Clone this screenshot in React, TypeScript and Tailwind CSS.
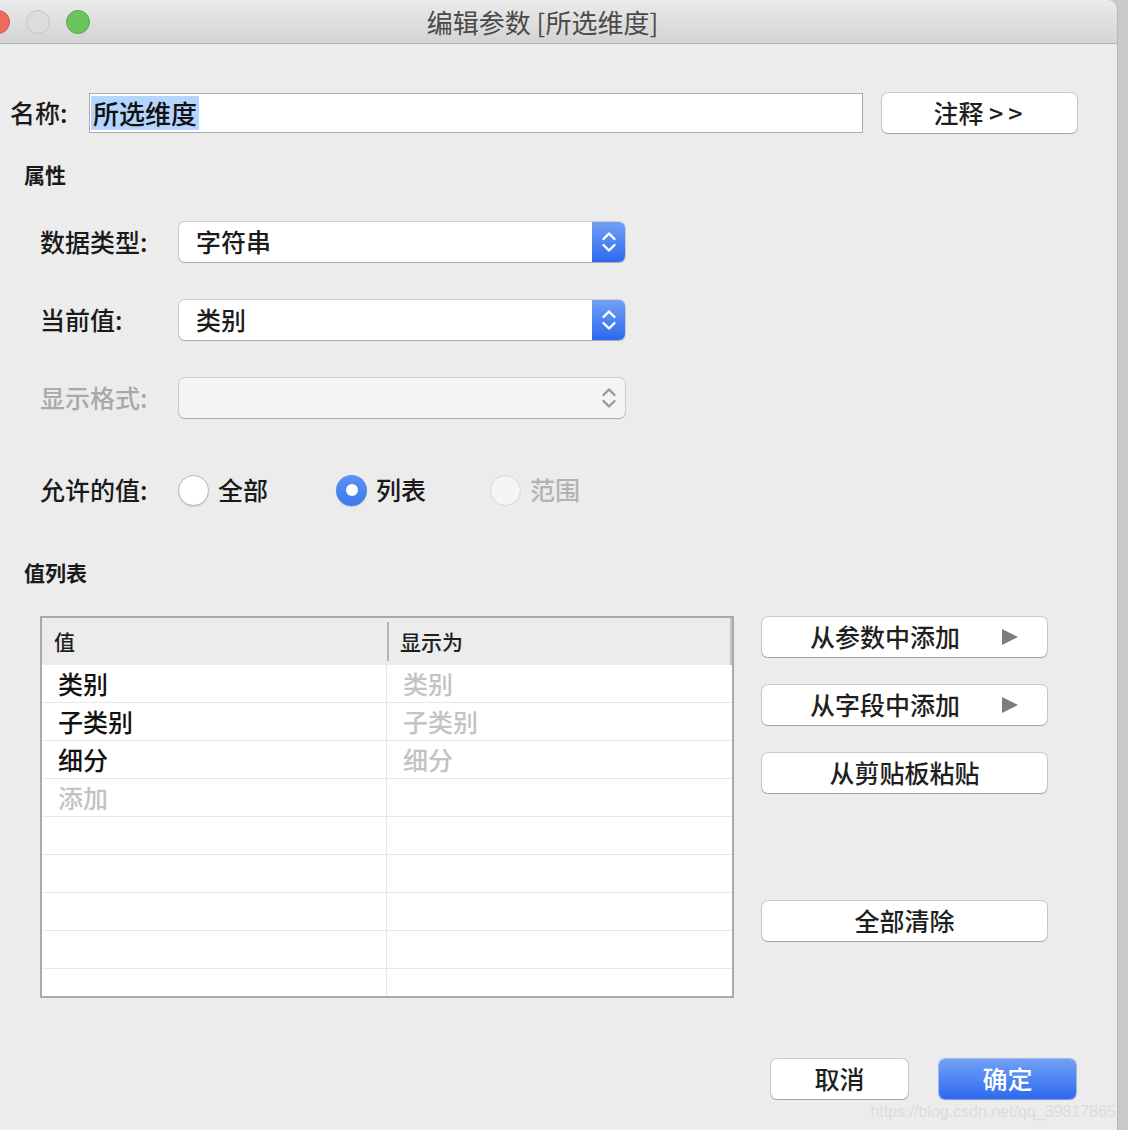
import React from "react";

const font = { fontFamily: '"Noto Sans CJK SC", "Noto Sans", sans-serif' };

const Chevrons = ({ color }: { color: string }) => (
  <svg width="16" height="26" viewBox="0 0 16 26" fill="none">
    <path d="M2.5 10 L8 4.5 L13.5 10" stroke={color} strokeWidth="2.4" strokeLinecap="round" strokeLinejoin="round" />
    <path d="M2.5 16 L8 21.5 L13.5 16" stroke={color} strokeWidth="2.4" strokeLinecap="round" strokeLinejoin="round" />
  </svg>
);

const Select = ({ value, disabled }: { value?: string; disabled?: boolean }) => (
  <div
    className={`flex h-[40px] w-[446px] rounded-[6px] shadow-[0_0_0_1px_rgba(0,0,0,0.12),0_1px_1px_rgba(0,0,0,0.18)] ${
      disabled ? "bg-[#f4f4f4]" : "bg-white"
    }`}
  >
    <div className="flex-1 flex items-center pl-[17px] text-[25px] font-medium text-[#1c1c1c]">{value}</div>
    {disabled ? (
      <div className="w-[32px] flex items-center justify-center">
        <Chevrons color="#9a9a9a" />
      </div>
    ) : (
      <div className="w-[33px] flex items-center justify-center rounded-r-[6px] bg-gradient-to-b from-[#72a0f6] to-[#2c68ef]">
        <Chevrons color="#ffffff" />
      </div>
    )}
  </div>
);

const Radio = ({ state }: { state: "off" | "on" | "disabled" }) => {
  if (state === "on")
    return (
      <div className="w-[31px] h-[31px] rounded-full bg-gradient-to-b from-[#5d92f3] to-[#3d78ee] flex items-center justify-center shadow-[0_1px_1px_rgba(0,0,0,0.15)]">
        <div className="w-[12px] h-[12px] rounded-full bg-white" />
      </div>
    );
  return (
    <div
      className={`w-[31px] h-[31px] rounded-full border ${
        state === "off" ? "bg-white border-[#b9b9b9] shadow-[0_1px_1px_rgba(0,0,0,0.12)]" : "bg-[#f5f5f5] border-[#d6d6d6]"
      }`}
    />
  );
};

const Triangle = () => (
  <svg width="16" height="16" viewBox="0 0 16 16">
    <polygon points="0,0 16,8 0,16" fill="#7d7d7d" />
  </svg>
);

const MacButton = ({ children, className = "" }: { children: React.ReactNode; className?: string }) => (
  <div
    className={`h-[40px] rounded-[6px] bg-white shadow-[0_0_0_1px_rgba(0,0,0,0.14),0_1px_1px_rgba(0,0,0,0.2)] flex items-center text-[25px] font-medium text-[#1f1f1f] ${className}`}
  >
    {children}
  </div>
);

const rows = [
  { v: "类别", d: "类别" },
  { v: "子类别", d: "子类别" },
  { v: "细分", d: "细分" },
  { v: "添加", d: "", placeholder: true },
  { v: "", d: "" },
  { v: "", d: "" },
  { v: "", d: "" },
  { v: "", d: "" },
  { v: "", d: "" },
];

export default function App() {
  return (
    <div className="w-[1128px] h-[1130px] flex bg-[#c9c9c9] overflow-hidden" style={font}>
      <div className="w-[1118px] h-full flex flex-col bg-[#ececec] rounded-tr-[10px] border-r border-[#b9b9b9]">
        {/* Title bar */}
        <div className="h-[44px] shrink-0 flex items-center rounded-tr-[10px] bg-gradient-to-b from-[#ebebeb] to-[#d3d3d3] border-b border-[#b1b1b1]">
          <div className="flex items-center gap-[16px] ml-[-14px] w-[104px] shrink-0">
            <div className="w-[24px] h-[24px] rounded-full bg-[#ec6a5e] border border-[#d3564b]" />
            <div className="w-[24px] h-[24px] rounded-full bg-[#dcdcdc] border border-[#c6c6c6]" />
            <div className="w-[24px] h-[24px] rounded-full bg-[#6cc25d] border border-[#58a94c]" />
          </div>
          <div className="flex-1 text-center text-[26px] text-[#4a4a4a] pr-[122px]">编辑参数 [所选维度]</div>
        </div>

        {/* Name row */}
        <div className="mt-[49px] flex items-center h-[40px]">
          <div className="ml-[10px] w-[79px] text-[25px] font-medium text-[#1a1a1a]">名称:</div>
          <div className="w-[774px] h-[40px] bg-white border border-[#ababab] flex items-center pl-[1px]">
            <span className="bg-[#b4d5fe] text-[26px] font-medium text-[#111] leading-[34px] px-[2px]">所选维度</span>
          </div>
          <MacButton className="ml-[19px] w-[195px] justify-center">
            <span className="ml-[2px]">
              注释 <span className="tracking-[5px]">&gt;&gt;</span>
            </span>
          </MacButton>
        </div>

        {/* Attributes */}
        <div className="mt-[27px] ml-[24px] h-[30px] flex items-center text-[21px] font-semibold text-[#1a1a1a]">属性</div>

        <div className="mt-[32px] ml-[40px] flex items-center">
          <div className="w-[139px] text-[25px] font-medium text-[#1a1a1a]">数据类型:</div>
          <Select value="字符串" />
        </div>
        <div className="mt-[38px] ml-[40px] flex items-center">
          <div className="w-[139px] text-[25px] font-medium text-[#1a1a1a]">当前值:</div>
          <Select value="类别" />
        </div>
        <div className="mt-[38px] ml-[40px] flex items-center">
          <div className="w-[139px] text-[25px] font-medium text-[#a9a9a9]">显示格式:</div>
          <Select disabled />
        </div>

        {/* Allowed values */}
        <div className="mt-[56px] ml-[40px] h-[32px] flex items-center">
          <div className="w-[138px] text-[25px] font-medium text-[#1a1a1a]">允许的值:</div>
          <div className="flex items-center w-[158px]">
            <Radio state="off" />
            <span className="ml-[9px] text-[25px] font-medium text-[#1a1a1a]">全部</span>
          </div>
          <div className="flex items-center w-[154px]">
            <Radio state="on" />
            <span className="ml-[9px] text-[25px] font-medium text-[#1a1a1a]">列表</span>
          </div>
          <div className="flex items-center">
            <Radio state="disabled" />
            <span className="ml-[9px] text-[25px] font-medium text-[#b3b3b3]">范围</span>
          </div>
        </div>

        {/* Value list */}
        <div className="mt-[52px] ml-[24px] h-[30px] flex items-center text-[21px] font-semibold text-[#1a1a1a]">值列表</div>

        <div className="mt-[28px] flex">
          <div className="ml-[40px] w-[694px] h-[382px] border-2 border-[#a9a9a9] bg-white flex flex-col overflow-hidden">
            <div className="h-[47px] shrink-0 flex items-center bg-[#ececec] border-r-2 border-[#c4c4c4]">
              <div className="w-[345px] pl-[12px] text-[21px] font-medium text-[#1f1f1f]">值</div>
              <div className="w-[2px] h-[39px] bg-[#b3b3b3]" />
              <div className="flex-1 pl-[11px] text-[21px] font-medium text-[#1f1f1f]">显示为</div>
            </div>
            {rows.map((r, i) => (
              <div key={i} className="h-[38px] shrink-0 flex border-b border-[#e7e7e7]">
                <div
                  className={`w-[345px] pl-[16px] flex items-center text-[25px] font-medium border-r border-[#e7e7e7] ${
                    r.placeholder ? "text-[#c3c3c3]" : "text-[#111]"
                  }`}
                >
                  {r.v}
                </div>
                <div className="flex-1 pl-[16px] flex items-center text-[25px] font-medium text-[#c3c3c3]">{r.d}</div>
              </div>
            ))}
          </div>

          <div className="ml-[28px] w-[285px] flex flex-col">
            <MacButton className="mt-[1px] w-[285px]">
              <span className="ml-[48px]">从参数中添加</span>
              <span className="flex-1" />
              <span className="mr-[29px]">
                <Triangle />
              </span>
            </MacButton>
            <MacButton className="mt-[28px] w-[285px]">
              <span className="ml-[48px]">从字段中添加</span>
              <span className="flex-1" />
              <span className="mr-[29px]">
                <Triangle />
              </span>
            </MacButton>
            <MacButton className="mt-[28px] w-[285px] justify-center">从剪贴板粘贴</MacButton>
            <MacButton className="mt-[108px] w-[285px] justify-center">全部清除</MacButton>
          </div>
        </div>

        {/* Footer buttons */}
        <div className="mt-[61px] flex justify-end pr-[41px] gap-[31px]">
          <MacButton className="w-[137px] justify-center">取消</MacButton>
          <div className="w-[137px] h-[40px] rounded-[6px] bg-gradient-to-b from-[#72a0f6] to-[#2d69ee] shadow-[0_0_0_1px_rgba(40,90,220,0.35),0_1px_1px_rgba(0,0,0,0.2)] flex items-center justify-center text-[25px] font-medium text-white">
            确定
          </div>
        </div>
        <div
          className="mt-[3px] flex justify-end pr-[1px] text-[16px] text-[#dcdcdc] leading-[20px]"
          style={{ fontFamily: '"Liberation Sans", Arial, sans-serif' }}
        >
          https://blog.csdn.net/qq_39817865
        </div>
      </div>
    </div>
  );
}
